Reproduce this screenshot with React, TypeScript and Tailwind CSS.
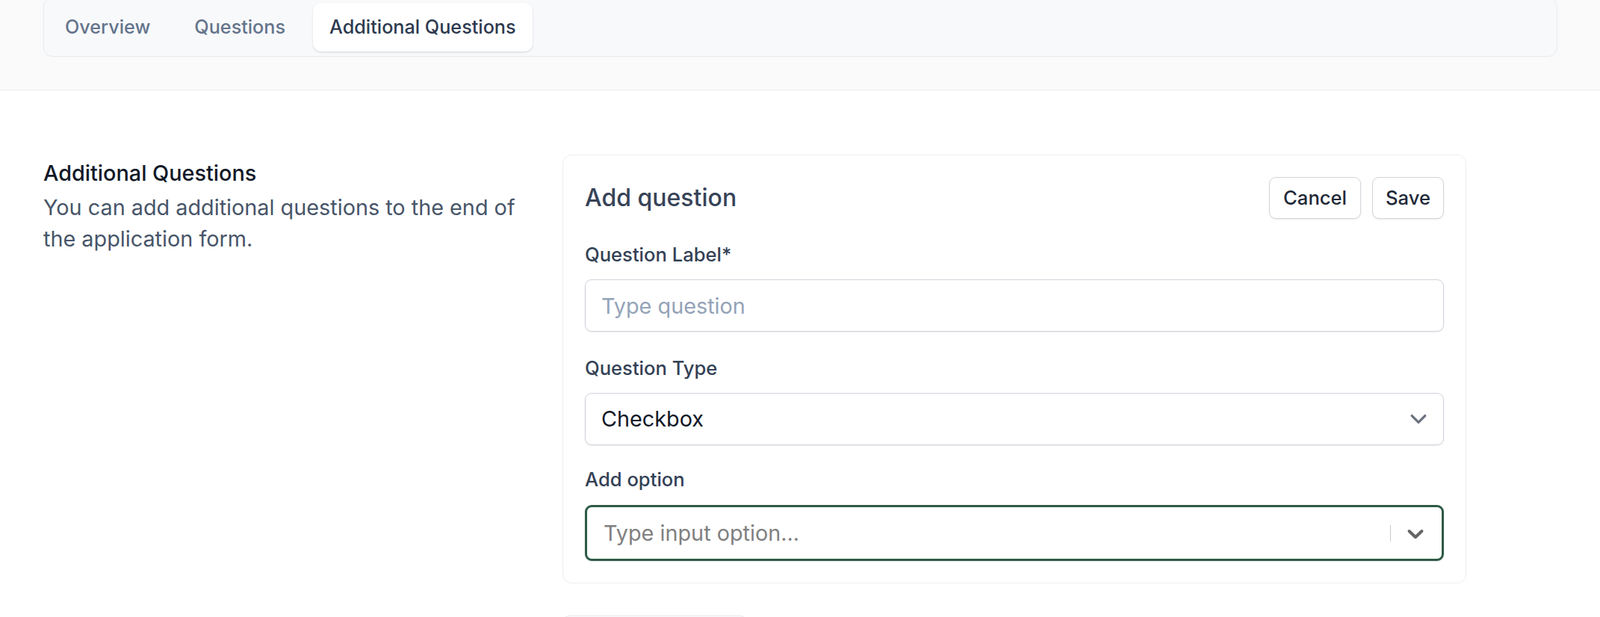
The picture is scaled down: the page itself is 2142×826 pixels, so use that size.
import React from "react";

function SelectChevron() {
  return (
    <svg width="44" height="44" viewBox="0 0 20 20" fill="none" aria-hidden="true">
      <path d="M6 8l4 4 4-4" stroke="#6b7280" strokeWidth="1.5" strokeLinecap="round" strokeLinejoin="round" />
    </svg>
  );
}

function ReactSelectChevron() {
  return (
    <svg width="36" height="36" viewBox="0 0 20 20" aria-hidden="true" fill="#666666">
      <path d="M4.516 7.548c0.436-0.446 1.043-0.481 1.576 0l3.908 3.747 3.908-3.747c0.533-0.481 1.141-0.446 1.574 0 0.436 0.445 0.408 1.197 0 1.615-0.406 0.418-4.695 4.502-4.695 4.502-0.217 0.223-0.502 0.335-0.787 0.335s-0.57-0.112-0.789-0.335c0 0-4.287-4.084-4.695-4.502s-0.436-1.17 0-1.615z" />
    </svg>
  );
}

export default function App() {
  const tabs = ["Overview", "Questions", "Additional Questions"];
  return (
    <div className="min-h-screen bg-white font-['Inter','Noto_Sans',sans-serif] antialiased">
      {/* Header band with tabs */}
      <div className="flex flex-col bg-[#fafafa] border-b border-[#ebebee] pl-[58px] pr-[57px] pb-[44px]">
        <div className="-mt-[3px] flex items-center gap-[15px] rounded-[12px] border border-[#e8eaee] bg-[#f8f9fb] p-[6px]">
          {tabs.map((t, i) => {
            const active = i === tabs.length - 1;
            return (
              <div
                key={t}
                className={
                  active
                    ? "flex h-[65px] items-center rounded-[11px] bg-white px-[22px] text-[25.2px] font-medium text-[#2d3a4f] shadow-[0_1px_3px_rgba(0,0,0,0.1),0_1px_2px_rgba(0,0,0,0.06)]"
                    : "flex h-[65px] items-center px-[22px] text-[25.2px] font-medium text-[#64748b]"
                }
              >
                {t}
              </div>
            );
          })}
        </div>
      </div>

      {/* Main section */}
      <div className="flex gap-[35px] pl-[58px] pt-[86px]">
        <div className="w-[660px] pt-[4px]">
          <h2 className="text-[28.8px] leading-[42px] font-medium text-[#111827]">Additional Questions</h2>
          <p className="mt-[4px] text-[28.8px] leading-[42px] text-[#475569]">
            You can add additional questions to the end of the application form.
          </p>
        </div>

        <div className="w-[1210px]">
          <div className="rounded-[12px] border border-[#eceef1] bg-white p-[29px]">
            <div className="flex h-[56px] items-center justify-between">
              <h3 className="text-[32px] font-medium text-[#374357]">Add question</h3>
              <div className="flex gap-[15px]">
                <button className="h-[56px] rounded-[9px] border border-[#d1d5db] bg-white px-[18px] text-[25.6px] font-medium text-[#1f2937] shadow-[0_1px_2px_rgba(0,0,0,0.08)]">
                  Cancel
                </button>
                <button className="h-[56px] rounded-[9px] border border-[#d1d5db] bg-white px-[17px] text-[25.6px] font-medium text-[#1f2937] shadow-[0_1px_2px_rgba(0,0,0,0.08)]">
                  Save
                </button>
              </div>
            </div>

            <label className="mt-[30px] block text-[25.6px] leading-[36px] font-medium text-[#334155]">Question Label*</label>
            <input
              type="text"
              placeholder="Type question"
              className="mt-[15px] block h-[70px] w-full rounded-[9px] border border-[#cfd4dc] bg-white px-[21px] text-[28.8px] text-[#111827] shadow-[0_1px_2px_rgba(0,0,0,0.08)] outline-none placeholder:text-[#94a3b8]"
            />

            <label className="mt-[31px] block text-[25.6px] leading-[36px] font-medium text-[#334155]">Question Type</label>
            <div className="mt-[15px] flex h-[70px] w-full items-center justify-between rounded-[9px] border border-[#cfd4dc] bg-white pl-[21px] pr-[11px] shadow-[0_1px_2px_rgba(0,0,0,0.08)]">
              <span className="text-[28.8px] text-[#111827]">Checkbox</span>
              <SelectChevron />
            </div>

            <label className="mt-[28px] block text-[25.6px] leading-[36px] font-medium text-[#334155]">Add option</label>
            <div className="mt-[16px] flex h-[75px] w-full items-center rounded-[9px] border-[3px] border-[#2d5a46] bg-white pl-[22px] pr-[17px] shadow-[0_1px_2px_rgba(0,0,0,0.08)]">
              <span className="flex-1 text-[28.8px] text-[#808080]">Type input option...</span>
              <div className="h-[22px] w-px bg-[#c8c8c8]" />
              <div className="ml-[15px] flex items-center">
                <ReactSelectChevron />
              </div>
            </div>
          </div>

          <div className="mt-[43px] h-[50px] w-[247px] rounded-[9px] border border-[#e5e7eb] bg-white shadow-[0_1px_2px_rgba(0,0,0,0.06)]" />
        </div>
      </div>
    </div>
  );
}
